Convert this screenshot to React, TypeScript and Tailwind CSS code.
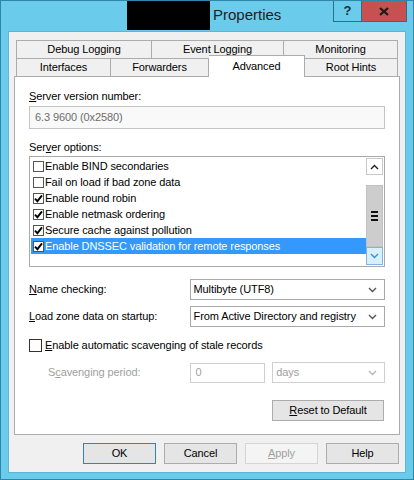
import React from "react";

function Check({ size = 9 }: { size?: number }) {
  return (
    <svg width={size} height={size} viewBox="0 0 9 9">
      <path d="M1 4.6 L3.4 7.2 L8 1.4" stroke="#000" strokeWidth="1.9" fill="none" />
    </svg>
  );
}

function ListItem({ label, checked, selected }: { label: string; checked?: boolean; selected?: boolean }) {
  return (
    <div className={`h-[16px] flex items-center pl-[2px] ${selected ? "bg-[#3399ff] text-white" : "text-[#000]"}`}>
      <span className="w-[11px] h-[11px] border border-[#555] bg-white flex items-center justify-center shrink-0">
        {checked && <Check />}
      </span>
      <span className="ml-[1px] leading-[16px] whitespace-nowrap">{label}</span>
    </div>
  );
}

function Chevron({ color = "#444", up }: { color?: string; up?: boolean }) {
  return (
    <svg width="9" height="6" viewBox="0 0 9 6">
      <path d={up ? "M1 5 L4.5 1.5 L8 5" : "M1 1 L4.5 4.5 L8 1"} stroke={color} strokeWidth="1.4" fill="none" />
    </svg>
  );
}

function Select({ value, disabled, className }: { value: string; disabled?: boolean; className: string }) {
  return (
    <div
      className={`h-[21px] border bg-white flex items-center justify-between pl-[3px] pr-[7px] whitespace-nowrap ${
        disabled ? "border-[#cfcfcf] text-[#a0a0a0]" : "border-[#a9a9a9] text-[#000]"
      } ${className}`}
    >
      <span>{value}</span>
      <Chevron color={disabled ? "#b5b5b5" : "#555"} />
    </div>
  );
}

function Btn({ children, kind }: { children: React.ReactNode; kind?: "default" | "disabled" }) {
  const cls =
    kind === "default"
      ? "border-[#3c7fb1] bg-[#e5e5e5] text-black"
      : kind === "disabled"
      ? "border-[#d5d5d5] bg-[#f4f4f4] text-[#a0a0a0]"
      : "border-[#acacac] bg-[#e5e5e5] text-black";
  return (
    <div className={`w-[73px] h-[21px] border flex items-center justify-center ${cls}`}>{children}</div>
  );
}

export default function App() {
  return (
    <div className="w-[414px] h-[480px] bg-[#6acbea] border border-[#2f86a8] flex flex-col font-['Liberation_Sans','Noto_Sans',sans-serif] text-[11px] tracking-[-0.1px] text-black overflow-hidden select-none">
      {/* title bar */}
      <div className="h-[29px] flex items-start relative shrink-0">
        <div className="ml-[126px] w-[83px] h-[29px] bg-black" />
        <div className="ml-[3px] mt-[4px] text-[15px] tracking-normal leading-[20px] text-[#1e1e1e]">Properties</div>
        <div className="ml-auto mr-[6px] flex -mt-[1px]">
          <div className="w-[28px] h-[22px] border border-[#2c6f8c] border-r-0 flex items-center justify-center font-bold text-[13px] text-[#1b2f3a]">
            ?
          </div>
          <div className="w-[46px] h-[22px] bg-[#c75050] border border-[#2c6f8c] flex items-center justify-center">
            <svg width="10" height="9" viewBox="0 0 10 9">
              <path d="M1 1 L9 8 M9 1 L1 8" stroke="#1a1a1a" strokeWidth="2.2" />
            </svg>
          </div>
        </div>
      </div>

      {/* client */}
      <div className="mx-[7px] mt-[1px] bg-[#f0f0f0] border border-[#5fb6d4] flex flex-col px-[5px] pt-[8px] h-[442px]">
        {/* tabs */}
        <div className="ml-[2px] w-[382px] flex flex-col relative z-10">
          <div className="flex h-[18px]">
            <div className="w-[136px] border border-[#acacac] border-b-0 bg-[#f0f0f0] flex items-center justify-center">Debug Logging</div>
            <div className="w-[132px] border border-[#acacac] border-b-0 border-l-0 bg-[#f0f0f0] flex items-center justify-center">Event Logging</div>
            <div className="w-[114px] border border-[#acacac] border-b-0 border-l-0 bg-[#f0f0f0] flex items-center justify-center">Monitoring</div>
          </div>
          <div className="flex h-[18px] items-end">
            <div className="w-[95px] h-[18px] border border-[#acacac] border-b-0 bg-[#f0f0f0] flex items-center justify-center">Interfaces</div>
            <div className="w-[98px] h-[18px] border border-[#acacac] border-b-0 border-l-0 bg-[#f0f0f0] flex items-center justify-center">Forwarders</div>
            <div className="w-[96px] h-[22px] -mt-[2px] -mb-[1px] border border-[#acacac] border-b-0 border-l-0 bg-white flex items-start justify-center pt-[2px]">Advanced</div>
            <div className="w-[93px] h-[18px] border border-[#acacac] border-b-0 border-l-0 bg-[#f0f0f0] flex items-center justify-center">Root Hints</div>
          </div>
        </div>

        {/* panel */}
        <div className="h-[359px] bg-white border border-[#acacac] flex flex-col px-[14px] pt-[11px]">
          <div className="leading-[16px]">
            <u>S</u>erver version number:
          </div>
          <div className="mt-[2px] h-[23px] border border-[#c4c4c4] bg-[#f9f9f9] text-[#6d6d6d] flex items-center pl-[5px]">
            6.3 9600 (0x2580)
          </div>
          <div className="mt-[10px] leading-[16px]">
            Ser<u>v</u>er options:
          </div>
          <div className="mt-[1px] h-[111px] border border-[#a9a9a9] bg-white p-[1px] flex">
            <div className="flex-1 flex flex-col">
              <ListItem label="Enable BIND secondaries" />
              <ListItem label="Fail on load if bad zone data" />
              <ListItem label="Enable round robin" checked />
              <ListItem label="Enable netmask ordering" checked />
              <ListItem label="Secure cache against pollution" checked />
              <ListItem label="Enable DNSSEC validation for remote responses" checked selected />
            </div>
            <div className="w-[17px] flex flex-col">
              <div className="h-[17px] border border-[#c8c8c8] bg-white flex items-center justify-center">
                <Chevron up color="#222" />
              </div>
              <div className="h-[10px] bg-white" />
              <div className="h-[62px] bg-[#cdcdcd] border border-[#c2c2c2] flex flex-col items-center justify-center gap-[2px]">
                <div className="w-[7px] h-[2px] bg-[#111]" />
                <div className="w-[7px] h-[2px] bg-[#111]" />
                <div className="w-[7px] h-[2px] bg-[#111]" />
              </div>
              <div className="h-[18px] border border-[#7eb4ea] bg-[#d9effa] flex items-center justify-center">
                <Chevron color="#3a8fcf" />
              </div>
            </div>
          </div>

          <div className="mt-[12px] flex items-center">
            <div className="w-[161px]">
              <u>N</u>ame checking:
            </div>
            <Select value="Multibyte (UTF8)" className="w-[196px]" />
          </div>
          <div className="mt-[6px] flex items-center">
            <div className="w-[161px]">
              <u>L</u>oad zone data on startup:
            </div>
            <Select value="From Active Directory and registry" className="w-[196px]" />
          </div>

          <div className="mt-[11px] flex items-center h-[14px]">
            <span className="w-[13px] h-[13px] border border-[#333] bg-white" />
            <span className="ml-[3px]">
              <u>E</u>nable automatic scavenging of stale records
            </span>
          </div>

          <div className="mt-[10px] flex items-center text-[#a0a0a0]">
            <div className="w-[161px] pl-[19px]">
              S<u>c</u>avenging period:
            </div>
            <div className="w-[76px] h-[20px] border border-[#cfcfcf] bg-white flex items-center pl-[5px]">0</div>
            <Select value="days" disabled className="ml-[7px] w-[113px] h-[20px]" />
          </div>

          <div className="mt-[17px] flex justify-end pr-[1px]">
            <div className="w-[112px] h-[21px] border border-[#acacac] bg-[#e5e5e5] flex items-center justify-center">
              <span>
                <u>R</u>eset to Default
              </span>
            </div>
          </div>
        </div>

        {/* dialog buttons */}
        <div className="mt-[8px] flex justify-end gap-[8px] pr-[1px]">
          <Btn kind="default">OK</Btn>
          <Btn>Cancel</Btn>
          <Btn kind="disabled">
            <span>
              <u>A</u>pply
            </span>
          </Btn>
          <Btn>Help</Btn>
        </div>
      </div>
    </div>
  );
}
